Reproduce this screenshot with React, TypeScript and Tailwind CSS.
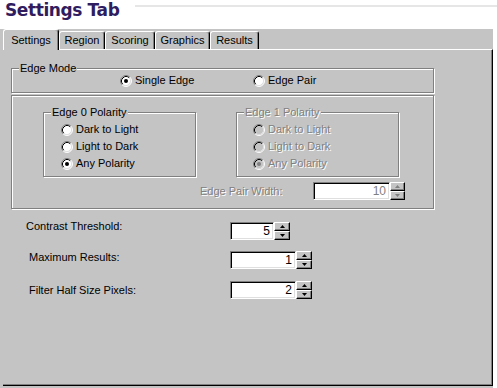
import React from "react";

const dis = "text-[#808080] [text-shadow:1px_1px_0_#fff]";

function Radio({ checked, disabled }: { checked?: boolean; disabled?: boolean }) {
  return (
    <svg width="12" height="12" viewBox="0 0 12 12" className="shrink-0">
      <circle cx="6" cy="6" r="5" fill={disabled ? "#c4c4c4" : "#fff"} />
      <path d="M2.11 9.89A5.5 5.5 0 0 1 9.89 2.11" stroke="#808080" fill="none" />
      <path d="M9.89 2.11A5.5 5.5 0 0 1 2.11 9.89" stroke="#fff" fill="none" />
      <path d="M2.82 9.18A4.5 4.5 0 0 1 9.18 2.82" stroke="#000" fill="none" />
      <path d="M9.18 2.82A4.5 4.5 0 0 1 2.82 9.18" stroke="#dfdfdf" fill="none" />
      {checked && <circle cx="6" cy="6" r="2" fill={disabled ? "#808080" : "#000"} />}
    </svg>
  );
}

function RadioItem({
  label,
  checked,
  disabled,
}: {
  label: string;
  checked?: boolean;
  disabled?: boolean;
}) {
  return (
    <div className="flex items-center gap-[3px] h-[17px]">
      <Radio checked={checked} disabled={disabled} />
      <span className={disabled ? dis : ""}>{label}</span>
    </div>
  );
}

function Group({
  label,
  disabled,
  className,
  children,
}: {
  label?: string;
  disabled?: boolean;
  className?: string;
  children?: React.ReactNode;
}) {
  return (
    <div
      className={`relative border border-[#808080] shadow-[inset_1px_1px_0_#fff,1px_1px_0_#fff] ${className ?? ""}`}
    >
      {label && (
        <span
          className={`absolute left-[7px] top-[-7px] px-px leading-[13px] bg-[#c4c4c4] ${disabled ? dis : ""}`}
        >
          {label}
        </span>
      )}
      {children}
    </div>
  );
}

function Arrow({ up, disabled }: { up?: boolean; disabled?: boolean }) {
  return (
    <svg width="5" height="3" viewBox="0 0 5 3">
      <path
        d={up ? "M2.5 0L5 3H0Z" : "M0 0H5L2.5 3Z"}
        fill={disabled ? "#808080" : "#000"}
      />
    </svg>
  );
}

function SpinBtn({ up, disabled }: { up?: boolean; disabled?: boolean }) {
  return (
    <div className="h-[9px] flex items-center justify-center bg-[#c4c4c4] border-t border-l border-white border-r border-b border-r-black border-b-black shadow-[inset_-1px_-1px_0_#808080]">
      <Arrow up={up} disabled={disabled} />
    </div>
  );
}

function Spinner({
  value,
  editClass,
  spinClass,
  disabled,
}: {
  value: string;
  editClass: string;
  spinClass: string;
  disabled?: boolean;
}) {
  return (
    <div className="flex h-[18px] shrink-0">
      <div
        className={`h-full flex items-center justify-end pr-[3px] bg-white border border-t-[#808080] border-l-[#808080] border-r-white border-b-white shadow-[inset_1px_1px_0_#000,inset_-1px_-1px_0_#dfdfdf] text-[12px] ${editClass} ${disabled ? "text-[#808080]" : ""}`}
      >
        {value}
      </div>
      <div className={`flex flex-col ${spinClass}`}>
        <SpinBtn up disabled={disabled} />
        <SpinBtn disabled={disabled} />
      </div>
    </div>
  );
}

export default function App() {
  const tabs = ["Region", "Scoring", "Graphics", "Results"];
  const tabW = ["w-[46px]", "w-[50px]", "w-[55px]", "w-[49px]"];

  return (
    <div className="w-[497px] h-[388px] bg-white overflow-hidden font-['Liberation_Sans',Arial,sans-serif] text-[11px] leading-[13px] text-black">
      {/* Title */}
      <div className="h-[29px] flex items-start">
        <h1 className="pl-[5px] pt-[2px] font-['DejaVu_Sans',Verdana,sans-serif] font-bold text-[17px] leading-[17px] tracking-[-0.4px] text-[#2f1d5f]">
          Settings Tab
        </h1>
        <div className="ml-auto mt-[5px] w-[362px] h-[2px] bg-[#e6e6e6]" />
      </div>

      <div className="w-[493px] h-[359px] bg-[#c4c4c4] flex flex-col pb-[2px]">
        {/* Tabs */}
        <div className="flex items-end h-[20px] pl-[3px] relative z-10">
          <div className="w-[56px] h-[21px] -mb-px flex items-center justify-center bg-[#c4c4c4] rounded-t-[3px] border-t border-l border-white border-r border-r-black shadow-[inset_-1px_0_0_#808080]">
            Settings
          </div>
          {tabs.map((t, i) => (
            <div
              key={t}
              className={`${tabW[i]} h-[18px] flex items-center justify-center rounded-t-[3px] border-t border-l border-white border-r border-r-black shadow-[inset_-1px_0_0_#808080]`}
            >
              {t}
            </div>
          ))}
        </div>

        {/* Panel */}
        <div className="ml-[3px] w-[490px] flex-1 border-t border-t-white border-r border-b border-r-black border-b-black shadow-[inset_-1px_-1px_0_#808080]">
          <div className="pl-[8px] pt-[18px] flex flex-col">
            <Group label="Edge Mode" className="w-[423px] h-[25px]">
              <div className="flex items-center h-full pl-[108px]">
                <div className="w-[133px]">
                  <RadioItem label="Single Edge" checked />
                </div>
                <RadioItem label="Edge Pair" />
              </div>
            </Group>

            <Group className="w-[423px] h-[114px] mt-[2px]">
              <div className="flex pl-[31px] pt-[16px]">
                <Group label="Edge 0 Polarity" className="w-[153px] h-[65px]">
                  <div className="flex flex-col pl-[17px] pt-[8px]">
                    <RadioItem label="Dark to Light" />
                    <RadioItem label="Light to Dark" />
                    <RadioItem label="Any Polarity" checked />
                  </div>
                </Group>
                <Group label="Edge 1 Polarity" disabled className="w-[163px] h-[65px] ml-[40px]">
                  <div className="flex flex-col pl-[16px] pt-[8px]">
                    <RadioItem label="Dark to Light" disabled />
                    <RadioItem label="Light to Dark" disabled />
                    <RadioItem label="Any Polarity" checked disabled />
                  </div>
                </Group>
              </div>
              <div className="flex items-center mt-[5px] pl-[188px]">
                <span className={`w-[113px] ${dis}`}>Edge Pair Width:</span>
                <Spinner value="10" editClass="w-[77px]" spinClass="w-[15px]" disabled />
              </div>
            </Group>

            <div className="flex items-start mt-[13px] pl-[15px]">
              <span className="w-[204px] -mt-[2px]">Contrast Threshold:</span>
              <Spinner value="5" editClass="w-[44px]" spinClass="w-[16px]" />
            </div>
            <div className="flex items-start mt-[11px] pl-[18px]">
              <span className="w-[201px]">Maximum Results:</span>
              <Spinner value="1" editClass="w-[66px]" spinClass="w-[16px]" />
            </div>
            <div className="flex items-center mt-[12px] pl-[18px]">
              <span className="w-[201px]">Filter Half Size Pixels:</span>
              <Spinner value="2" editClass="w-[66px]" spinClass="w-[16px]" />
            </div>
          </div>
        </div>
      </div>
    </div>
  );
}
